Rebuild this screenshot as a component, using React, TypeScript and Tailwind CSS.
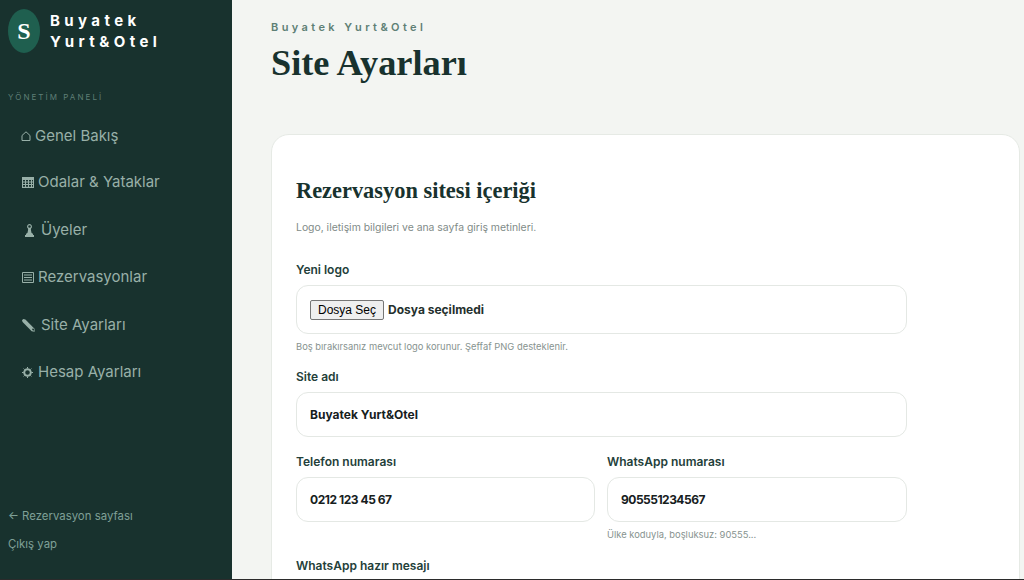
import React from "react";

const sans = { fontFamily: '"Inter", "Noto Sans", sans-serif' };

const HomeIcon = (
  <svg width="10" height="10" viewBox="0 0 10 10" fill="none" stroke="currentColor" strokeWidth="1">
    <path d="M1 9.5V4.5L5 .8l4 3.700v5z" />
  </svg>
);
const GridIcon = (
  <svg width="12" height="11" viewBox="0 0 12 11" fill="currentColor" className="ml-[1px]">
    <path d="M0 0h12v11H0zM1 3v1.500h2V3zm3 0v1.500h2V3zm3 0v1.500h2V3zm3 0v1.500h1V3zM1 5.500V7h2V5.500zm3 0V7h2V5.500zm3 0V7h2V5.500zm3 0V7h1V5.500zM1 8v1.800h2V8zm3 0v1.800h2V8zm3 0v1.800h2V8zm3 0v1.800h1V8z" fillRule="evenodd" />
  </svg>
);
const PersonIcon = (
  <svg width="9" height="13" viewBox="0 0 9 13" fill="currentColor" className="ml-[4px]">
    <path fillRule="evenodd" d="M4.500 0a2.500 2.500 0 0 1 1.600 4.400c-.2.2-.3.5-.2 1l.5 3.100c.1.5.5.7 1 .9l.6.3V11h1v2H0v-2h1V9.700l.6-.3c.5-.2.9-.4 1-.9l.5-3.100c.1-.5 0-.8-.2-1A2.500 2.500 0 0 1 4.500 0zm0 1.200a1.300 1.300 0 1 0 0 2.600 1.300 1.300 0 0 0 0-2.600z" />
  </svg>
);
const ListIcon = (
  <svg width="12" height="11" viewBox="0 0 12 11" fill="none" stroke="currentColor" strokeWidth="1" className="ml-[1px]">
    <path d="M.5.500h11v10H.5zM2 3h8M2 5.500h8M2 8h8" />
  </svg>
);
const PencilIcon = (
  <svg width="13" height="13" viewBox="0 0 13 13" fill="currentColor" className="ml-[1px]">
    <path d="M1.300 0 3.400.4l9.100 9.300.2 3-3-.4L.6 3.100 0 1.200z" />
    <path d="M10 10.200l1-.9 1 1v1.200h-1.100z" fill="#18322e" />
  </svg>
);
const GearIcon = (
  <svg width="11" height="11" viewBox="0 0 11 11" fill="none" stroke="currentColor" className="ml-[1px]">
    <circle cx="5.500" cy="5.500" r="3.300" strokeWidth="2" />
    <path d="M5.500 0v1.500M5.500 9.500V11M0 5.500h1.500M9.500 5.500H11M1.600 1.600l1 1M8.400 8.400l1 1M9.400 1.600l-1 1M2.600 8.400l-1 1" strokeWidth="1" />
  </svg>
);

const navItems = [
  { icon: HomeIcon, label: "Genel Bakış", slot: "w-[14px]", h: "h-[46px]" },
  { icon: GridIcon, label: "Odalar & Yataklar", slot: "w-[17px]", h: "h-[47px]" },
  { icon: PersonIcon, label: "Üyeler", slot: "w-[20px]", h: "h-[48px]" },
  { icon: ListIcon, label: "Rezervasyonlar", slot: "w-[17px]", h: "h-[47px]" },
  { icon: PencilIcon, label: "Site Ayarları", slot: "w-[20px]", h: "h-[48px]" },
  { icon: GearIcon, label: "Hesap Ayarları", slot: "w-[17px]", h: "h-[47px]" },
];

function Label({ children }: { children: React.ReactNode }) {
  return <div className="text-[12px] leading-[16px] font-semibold text-[#24403a] mb-[7px]">{children}</div>;
}

function Box({ children, className }: { children: React.ReactNode; className: string }) {
  return (
    <div className={`flex items-center rounded-[12px] border border-[#e4e8e4] bg-white px-[13px] text-[12px] font-bold text-[#16201d] ${className}`}>
      {children}
    </div>
  );
}

function Hint({ children }: { children: React.ReactNode }) {
  return <div className="text-[9.4px] leading-[12px] text-[#87938f] mt-[7px]">{children}</div>;
}

export default function App() {
  return (
    <div style={sans} className="flex h-[580px] w-[1024px] overflow-hidden bg-[#f3f5f2] border-b border-[#2b2b2b]">
      <aside className="flex w-[232px] shrink-0 flex-col bg-[#18322e] pl-[8px]">
        <div className="flex items-center gap-[10px] pt-[9px]">
          <div className="flex h-[44px] w-[32px] items-center justify-center rounded-[50%] bg-[#1f5f4f] text-[24px] font-bold text-white [font-family:'Liberation_Serif',serif]">
            S
          </div>
          <div className="text-[15px] leading-[21px] font-bold tracking-[4.4px] text-white">
            <div>Buyatek</div>
            <div>Yurt&amp;Otel</div>
          </div>
        </div>
        <div className="mt-[38px] text-[8px] leading-[12px] tracking-[2.05px] text-[#5f7f76]">YÖNETİM PANELİ</div>
        <nav className="mt-[10px] pl-[13px]">
          {navItems.map((item) => (
            <div key={item.label} className={`flex items-center text-[15px] text-[#98b0a8] ${item.h}`}>
              <span className={`flex shrink-0 items-center ${item.slot}`}>{item.icon}</span>
              <span>{item.label}</span>
            </div>
          ))}
        </nav>
        <div className="mt-auto pb-[21px] text-[11.4px] text-[#7fa097]">
          <div className="h-[28px] leading-[28px]">← Rezervasyon sayfası</div>
          <div className="h-[28px] leading-[28px]">Çıkış yap</div>
        </div>
      </aside>

      <main className="min-w-0 flex-1 pl-[39px] pr-[4px] pt-[20px]">
        <div className="text-[11px] leading-[14px] font-semibold tracking-[3.4px] text-[#5e7f75]">Buyatek Yurt&amp;Otel</div>
        <h1 className="mt-[4px] text-[36.3px] leading-[50px] font-bold text-[#18322e] [font-family:'Liberation_Serif',serif]">
          Site Ayarları
        </h1>
        <section className="mt-[46px] h-[520px] rounded-t-[18px] border border-[#e6eae5] bg-white px-[24px] pt-[41px]">
          <div className="w-[611px]">
            <h2 className="text-[22.4px] leading-[30px] font-bold text-[#18322e] [font-family:'Liberation_Serif',serif]">
              Rezervasyon sitesi içeriği
            </h2>
            <p className="mt-[14px] text-[10.4px] leading-[16px] text-[#7f8b88]">
              Logo, iletişim bilgileri ve ana sayfa giriş metinleri.
            </p>
            <div className="mt-[26px]">
              <Label>Yeni logo</Label>
              <Box className="h-[49px]">
                <button className="mr-[4px] h-[20px] rounded-[2px] border border-[#767676] bg-[#efefef] px-[7px] text-[12px] font-normal text-black [font-family:'Liberation_Sans',sans-serif]">
                  Dosya Seç
                </button>
                <span className="text-[#24302d]">Dosya seçilmedi</span>
              </Box>
              <Hint>Boş bırakırsanız mevcut logo korunur. Şeffaf PNG desteklenir.</Hint>
            </div>
            <div className="mt-[16px]">
              <Label>Site adı</Label>
              <Box className="h-[45px]">Buyatek Yurt&amp;Otel</Box>
            </div>
            <div className="mt-[17px] grid grid-cols-[299px_300px] gap-[12px]">
              <div>
                <Label>Telefon numarası</Label>
                <Box className="h-[45px]">
                  <span className="tracking-[-0.45px]">0212 123 45 67</span>
                </Box>
              </div>
              <div>
                <Label>WhatsApp numarası</Label>
                <Box className="h-[45px]">
                  <span className="tracking-[-0.5px]">905551234567</span>
                </Box>
                <Hint>Ülke koduyla, boşluksuz: 90555...</Hint>
              </div>
            </div>
            <div className="mt-[17px]">
              <Label>WhatsApp hazır mesajı</Label>
            </div>
          </div>
        </section>
      </main>
    </div>
  );
}
